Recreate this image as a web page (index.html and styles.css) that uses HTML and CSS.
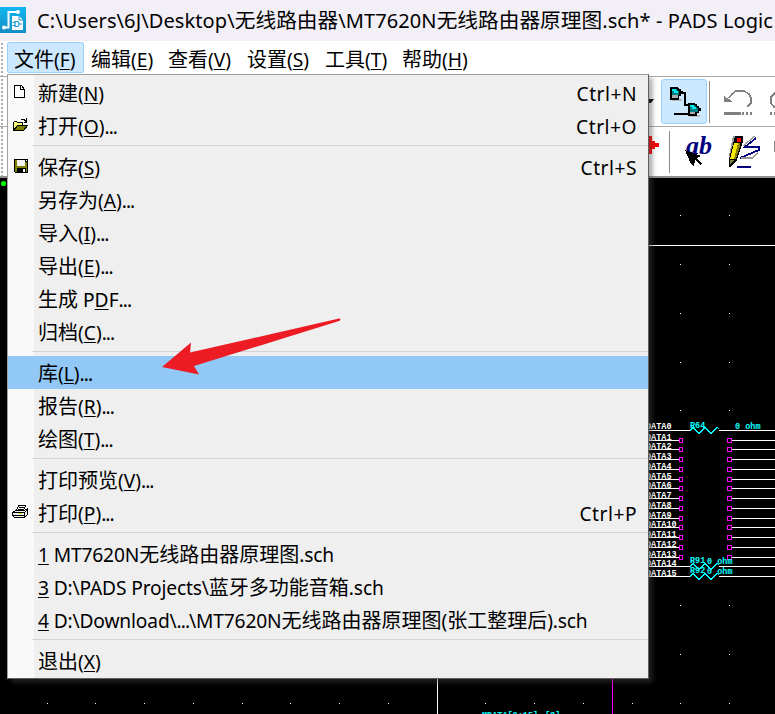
FILE: index.html
```html
<!DOCTYPE html>
<html lang="zh-CN">
<head>
<meta charset="utf-8">
<title>PADS Logic</title>
<link rel="stylesheet" href="styles.css">
</head>
<body>
<div class="app">
  <header class="title">
    <svg class="logo" width="26" height="26" viewBox="0 0 26 26">
      <defs><linearGradient id="lg" x1="0" y1="0" x2="0" y2="1"><stop offset="0" stop-color="#12b6f0"/><stop offset="1" stop-color="#118fc4"/></linearGradient></defs>
      <rect width="26" height="26" fill="url(#lg)"/>
      <path d="M5 20.500H8.500V5H17" fill="none" stroke="#fff" stroke-width="2"/>
      <circle cx="4" cy="20.500" r="2" fill="#fff"/><circle cx="18" cy="5" r="2" fill="#fff"/>
      <path d="M12 9h7l4 4v10H12z" fill="#fff"/><path d="M19 9v4h4" fill="none" stroke="#159bd0"/>
      <path d="M15 14.500h2.500q3.500 2.500 0 5H15zM12.500 15.500H15M12.500 18.500H15M19.500 17H22" fill="none" stroke="#159bd0" stroke-width="1.200"/>
    </svg>
    <span class="title-text">C:\Users\6J\Desktop\<span class="zh">无线路由器</span>\MT7620N<span class="zh">无线路由器原理图</span>.sch* - PADS Logic</span>
  </header>
  <nav class="menubar">
    <span class="top open"><span class="zh">文件</span>(<u>F</u>)</span>
    <span class="top"><span class="zh">编辑</span>(<u>E</u>)</span>
    <span class="top"><span class="zh">查看</span>(<u>V</u>)</span>
    <span class="top"><span class="zh">设置</span>(<u>S</u>)</span>
    <span class="top"><span class="zh">工具</span>(<u>T</u>)</span>
    <span class="top"><span class="zh">帮助</span>(<u>H</u>)</span>
  </nav>
  <div class="toolbar">
    <svg class="drop" width="6" height="6" viewBox="0 0 6 6"><path d="M0 0H6L3 4H0z"/></svg>
    <span class="tool active">
      <svg width="32" height="30" viewBox="0 0 32 30" shape-rendering="crispEdges">
        <path d="M3 12h10v2H3z" fill="#bbb"/>
        <path d="M1 0h7l2 1v1h2v2h2v3h-2v2h-2v4H1z"/><path d="M3 2h4l3 3v3H3z" fill="#008080"/><path d="M3 2h4v2h2v2H5V4H3z" fill="#00eeee"/><path d="M3 8h6v3H3z" fill="#aaa"/>
        <path d="M13 6h3v12h3M5 27h15" fill="none" stroke="#000" stroke-width="2"/>
        <path d="M21 28h10v2H21z" fill="#bbb"/>
        <path d="M19 16h7v1h2v2h2v2h2v3h-2v2h-2v3h-9z"/><path d="M21 18h4l4 4v3h-8z" fill="#008080"/><path d="M21 18h4v2h2v2h-4v-2h-2z" fill="#00eeee"/><path d="M21 25h5v2h-5z" fill="#aaa"/>
      </svg>
    </span>
    <i class="rule"></i>
    <svg class="undo" width="51" height="26" viewBox="0 0 51 26" shape-rendering="crispEdges" fill="none" stroke="#808080" stroke-width="1.600">
      <path d="M0 5v7h8l-3-3-3-1z" fill="#808080" stroke="none"/><path d="M5 8l3-4 4-3h8l5 3 2 4v5l-4 4"/><path d="M0 23h17" stroke-width="3"/><path d="M18 23h12" stroke-width="3" stroke-dasharray="2 2"/>
      <path d="M56 1l-5 2-4 4v6l3 4h3"/><path d="M46 23h8" stroke-width="3" stroke-dasharray="2 2"/>
    </svg>
  </div>
  <div class="toolbar second">
    <svg class="cross" width="12" height="18" viewBox="0 0 12 18"><path d="M0 0h4v5h3v2h4v4H7v2H4v5H0z" fill="#f00"/></svg>
    <i class="rule"></i>
    <svg class="query" width="30" height="32" viewBox="0 0 30 32" shape-rendering="crispEdges">
      <text x="2" y="18" class="ab" textLength="26" lengthAdjust="spacingAndGlyphs">ab</text>
      <path d="M1 14l16 6-4 2 5 6-2 1-5-5-1 7-3-3z"/>
    </svg>
    <svg class="draft" width="34" height="34" viewBox="0 0 34 34" shape-rendering="crispEdges">
      <path d="M5 1h4v3L4 29H1v-9z" fill="#999"/><path d="M7 1h8v5l-6 19-6 7H1v-8z"/><path d="M9 3h4v4H9z" fill="#f00"/><path d="M6 8h4L6 24H2z" fill="#f4e900"/><path d="M10 8h2v4L8 24H6z" fill="#888000"/><path d="M2 25h4l-4 5z" fill="#808040"/>
      <path d="M28 3L17 12h14v3L12 23h12M9 32h14" fill="none" stroke="#000080" stroke-width="1.800"/><path d="M27 1L15 11M30 17l-5 6H13" fill="none" stroke="#999" stroke-width="1.200"/>
    </svg>
    <i class="stub"></i>
  </div>
  <div class="sheet">
    <svg width="775" height="536" viewBox="0 178 775 536" shape-rendering="crispEdges">
      <circle cx="3.500" cy="183.500" r="2.600" fill="#0f0" shape-rendering="auto"/>
      <path class="white" d="M680 215.500h1m48 0h1M680 264.500h1m48 0h1M680 313.500h1m48 0h1M680 362.500h1m48 0h1M680 410.500h1m48 0h1M680 605.500h1m48 0h1M680 654.500h1m48 0h1M47 703.500h1m47 0h1m48 0h1m48 0h1m48 0h1m47 0h1m48 0h1m48 0h1M485 703.500h1m48 0h1m48 0h1m48 0h1m47 0h1m48 0h1"/>
      <path class="white" d="M649 245.500H775M437.500 679V714M649 430.500H690M719 430.500H775M649 566.500H690M719 566.500H775M649 576.500H690M719 576.500H775"/>
      <path class="white" d="M649 440.500H680m51 0H775M649 449.500H680m51 0H775M649 459.500H680m51 0H775M649 469.500H680m51 0H775M649 479.500H680m51 0H775M649 488.500H680m51 0H775M649 498.500H680m51 0H775M649 508.500H680m51 0H775M649 518.500H680m51 0H775M649 527.500H680m51 0H775M649 537.500H680m51 0H775M649 547.500H680m51 0H775M649 557.500H680m51 0H775"/>
      <path d="M612.500 679V714" stroke="#f0f"/>
      <g fill="none" stroke="#f0f">
        <path d="M679.500 438.500h3v4h-3zM679.500 447.500h3v4h-3zM679.500 457.500h3v4h-3zM679.500 467.500h3v4h-3zM679.500 477.500h3v4h-3zM679.500 486.500h3v4h-3zM679.500 496.500h3v4h-3zM679.500 506.500h3v4h-3zM679.500 516.500h3v4h-3zM679.500 525.500h3v4h-3zM679.500 535.500h3v4h-3zM679.500 545.500h3v4h-3zM679.500 555.500h3v4h-3z"/>
        <path d="M727.500 438.500h4v4h-4zM727.500 447.500h4v4h-4zM727.500 457.500h4v4h-4zM727.500 467.500h4v4h-4zM727.500 477.500h4v4h-4zM727.500 486.500h4v4h-4zM727.500 496.500h4v4h-4zM727.500 506.500h4v4h-4zM727.500 516.500h4v4h-4zM727.500 525.500h4v4h-4zM727.500 535.500h4v4h-4zM727.500 545.500h4v4h-4zM727.500 555.500h4v4h-4z"/>
      </g>
      <path fill="none" stroke="#0ff" d="M690 430.500l3-3 6 6 6-6 6 6 6-6 2 1M690 566.500l3-3 6 6 6-6 6 6 6-6 2 1M690 576.500l3-3 6 6 6-6 6 6 6-6 2 1"/>
      <g class="net">
        <text x="646" y="429">DATA0</text><text x="646" y="440">DATA1</text><text x="646" y="449">DATA2</text><text x="646" y="459">DATA3</text><text x="646" y="469">DATA4</text><text x="646" y="479">DATA5</text><text x="646" y="488">DATA6</text><text x="646" y="498">DATA7</text><text x="646" y="508">DATA8</text><text x="646" y="518">DATA9</text><text x="646" y="527">DATA10</text><text x="646" y="537">DATA11</text><text x="646" y="547">DATA12</text><text x="646" y="557">DATA13</text><text x="646" y="566">DATA14</text><text x="646" y="576">DATA15</text>
      </g>
      <g class="net part">
        <text x="690" y="428">R64</text><text x="735" y="429">0 ohm</text><text x="690" y="563">R91</text><text x="707" y="564">0 ohm</text><text x="690" y="573">R92</text><text x="707" y="574">0 ohm</text><text x="482" y="718">MDATA[0:15]</text><text x="545" y="718">[8]</text>
      </g>
    </svg>
  </div>
  <div class="edge"></div>
  <div class="menu">
    <div class="item"><svg class="ico" width="16" height="16" viewBox="0 0 16 16" shape-rendering="crispEdges"><path d="M2.500 1.500h7l3 4v8h-10zM8.500 1.500v4h4" fill="#fff" stroke="#000"/></svg><span><span class="zh">新建</span>(<u>N</u>)</span><kbd>Ctrl+N</kbd></div>
    <div class="item"><svg class="ico" width="16" height="16" viewBox="0 0 16 16" shape-rendering="crispEdges"><path d="M1.500 13.500v-8l1-1h2l1 1h5v3" fill="#ffff80" stroke="#000"/><path d="M1.500 13.500l4-5h10l-4 5z" fill="#808000" stroke="#000"/><path d="M9 2.500h3l2 2M14.500 1v4h-3" fill="none" stroke="#000"/></svg><span><span class="zh">打开</span>(<u>O</u>)<span class="dots">...</span></span><kbd>Ctrl+O</kbd></div>
    <hr>
    <div class="item"><svg class="ico" width="16" height="16" viewBox="0 0 16 16" shape-rendering="crispEdges"><path d="M2 1h14v14H3l-1-1z"/><path d="M3 2h2v6h8V4h2v10H3z" fill="#808000"/><path d="M5 2h8v6H5z" fill="#f4f4f4"/><path d="M5 10h9v4H5z"/><path d="M11 11h2v3h-2zM14 2h1v1h-1z" fill="#fff"/></svg><span><span class="zh">保存</span>(<u>S</u>)</span><kbd>Ctrl+S</kbd></div>
    <div class="item"><span><span class="zh">另存为</span>(<u>A</u>)<span class="dots">...</span></span></div>
    <div class="item"><span><span class="zh">导入</span>(<u>I</u>)<span class="dots">...</span></span></div>
    <div class="item"><span><span class="zh">导出</span>(<u>E</u>)<span class="dots">...</span></span></div>
    <div class="item"><span><span class="zh">生成</span> P<u>D</u>F<span class="dots">...</span></span></div>
    <div class="item"><span><span class="zh">归档</span>(<u>C</u>)<span class="dots">...</span></span></div>
    <hr>
    <div class="item hot"><span><span class="zh">库</span>(<u>L</u>)<span class="dots">...</span></span></div>
    <div class="item"><span><span class="zh">报告</span>(<u>R</u>)<span class="dots">...</span></span></div>
    <div class="item"><span><span class="zh">绘图</span>(<u>T</u>)<span class="dots">...</span></span></div>
    <hr>
    <div class="item"><span><span class="zh">打印预览</span>(<u>V</u>)<span class="dots">...</span></span></div>
    <div class="item"><svg class="ico" width="16" height="16" viewBox="0 0 16 16" shape-rendering="crispEdges"><path d="M4.500 6.500l2-5h7l-2 5M7 3.500h5M6 5.500h5" fill="#fff" stroke="#000"/><path d="M.500 8.500l3-2h9l3-2v6l-3 3h-10l-2-2z" fill="#eee" stroke="#000"/><path d="M1 8.500h11.500v5M12.500 8.500l3-3M1 11.500h11" fill="none" stroke="#000"/><path d="M7 9.500h3" stroke="#dd0"/></svg><span><span class="zh">打印</span>(<u>P</u>)<span class="dots">...</span></span><kbd>Ctrl+P</kbd></div>
    <hr>
    <div class="item file"><span><u>1</u> MT7620N<span class="zh">无线路由器原理图</span>.sch</span></div>
    <div class="item file"><span><u>3</u> D:\PADS Projects\<span class="zh">蓝牙多功能音箱</span>.sch</span></div>
    <div class="item file"><span><u>4</u> D:\Download\<span class="dots">...</span>\MT7620N<span class="zh">无线路由器原理图</span>(<span class="zh">张工整理后</span>).sch</span></div>
    <hr>
    <div class="item"><span><span class="zh">退出</span>(<u>X</u>)</span></div>
  </div>
  <svg class="arrow" width="180" height="60" viewBox="162 317 180 60"><path d="M339 318.500Q342 319 339 321L194 366l5 8.500L162 367l29-24.500-1 10z" fill="#ed1c24"/></svg>
</div>
</body>
</html>
```

FILE: styles.css
```css
* { box-sizing: border-box; }
body { margin: 0; }
.app {
  position: relative;
  width: 775px;
  height: 714px;
  overflow: hidden;
  background: #fff;
  color: #000;
  font: 19.2px/33px "Noto Sans", "Noto Sans CJK SC", sans-serif;
  white-space: nowrap;
}
.zh { font-family: "Noto Sans CJK SC", sans-serif; font-size: 20px; font-weight: 400; line-height: 1; letter-spacing: 0; }
u { text-decoration-thickness: 1px; text-underline-offset: 2px; text-decoration-skip-ink: none; }
svg { display: block; flex: none; }

.title { display: flex; align-items: center; height: 41px; background: #f2eff7; font-size: 20px; letter-spacing: .1px; }
.title .zh { font-size: 20.7px; }
.logo { margin-top: -1px; }
.title-text { margin-left: 11px; }

.menubar {
  display: grid;
  grid-template-columns: 77px 77px 79px 78px 77px 80px;
  height: 35px;
  padding: 1px 0 2px 7px;
}
.top { height: 31px; padding-left: 6px; line-height: 34px; border: 1px solid transparent; border-radius: 2px; }
.top.open { background: #cce8ff; border-color: #99d1ff; }

.toolbar { display: flex; align-items: center; height: 50px; padding-left: 648px; border-top: 1px solid #a9a9a9; }
.second { height: 52px; border-bottom: 2px solid #909090; }
.rule { flex: none; width: 1px; height: 42px; background: #8a8a8a; }
.tool { flex: none; width: 46px; height: 45px; margin-left: 7px; padding: 7px 0 0 7px; }
.active { background: #cce8ff; border: 1px solid #99d1ff; border-radius: 3px; }
.toolbar .tool + .rule { margin-left: 2px; }
.undo { margin: 3px 0 0 14px; }
.cross { margin: -13px 9px 0 0; }
.query { margin-left: 14px; overflow: visible; }
.draft { margin: 0 0 0 14px; }
.ab { font: italic bold 26px "Liberation Serif", serif; fill: #000080; }
.stub { width: 2px; height: 11px; margin: -11px 0 0 12px; background: #888; }

.sheet { height: 536px; background: #000; }
.white { stroke: #fff; fill: none; }
.net { font: bold 8.5px "Liberation Mono", monospace; fill: #fff; }
.part { fill: #00ffff; }

.edge {
  position: absolute;
  left: 1px;
  top: 43px;
  width: 2px;
  height: 133px;
  background: repeating-linear-gradient(#aaa 0 2px, transparent 2px 4px);
}

.menu {
  position: absolute;
  left: 7px;
  top: 74px;
  width: 642px;
  height: 605px;
  padding-top: 1px;
  border: 1px solid #606060;
  border-top-color: #a0a0a0;
  border-left-color: #a0a0a0;
  background: linear-gradient(90deg, #f9f9f9 26px, #efefef 26px);
  box-shadow: 4px 4px 4px rgba(70, 70, 70, .4);
}
.item { position: relative; display: flex; height: 33px; padding: 0 11px 0 30px; line-height: 36px; }
.file { letter-spacing: -.15px; }
.dots { letter-spacing: -1px; }
.ico { position: absolute; left: 4px; top: 8px; }
.hot { background: #91c8f6; }
kbd { margin-left: auto; font: inherit; letter-spacing: .5px; }
hr { height: 1px; margin: 3px 0 4px 24px; border: 0; background: #d5d5d5; }
.arrow { position: absolute; left: 162px; top: 317px; }
```
